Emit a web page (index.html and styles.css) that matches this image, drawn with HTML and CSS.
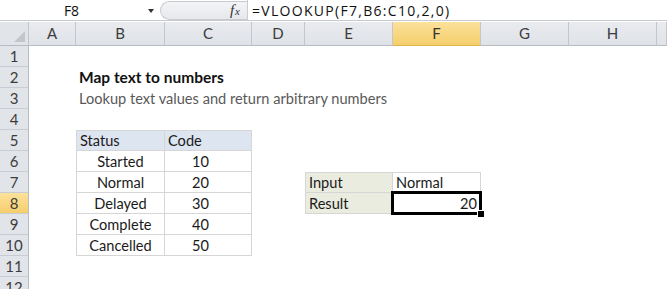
FILE: index.html
```html
<!DOCTYPE html>
<html>
<head>
<meta charset="utf-8">
<link rel="stylesheet" href="styles.css">
</head>
<body>
<div class="app">
  <div class="formula-bar">
    <div class="name-box"><span class="name">F8</span><span class="caret"></span></div>
    <div class="fx-area"><div class="pill"><span class="fx"><i>f</i><i class="x">x</i></span></div></div>
    <div class="formula">=VLOOKUP(F7,B6:C10,2,0)</div>
  </div>
  <div class="sheet">
    <div class="corner"><span class="tri"></span></div><div class="ch">A</div><div class="ch">B</div><div class="ch">C</div><div class="ch">D</div><div class="ch">E</div><div class="ch active">F</div><div class="ch">G</div><div class="ch">H</div><div class="ch"></div>

    <div class="rh">1</div><div></div><div></div><div></div><div></div><div></div><div></div><div></div><div></div><div></div>
    <div class="rh">2</div><div></div><div class="title">Map text to numbers</div><div></div><div></div><div></div><div></div><div></div><div></div><div></div>
    <div class="rh">3</div><div></div><div class="subtitle">Lookup text values and return arbitrary numbers</div><div></div><div></div><div></div><div></div><div></div><div></div><div></div>
    <div class="rh">4</div><div></div><div></div><div></div><div></div><div></div><div></div><div></div><div></div><div></div>
    <div class="rh">5</div><div></div><div class="t th first top">Status</div><div class="t th top">Code</div><div></div><div></div><div></div><div></div><div></div><div></div>
    <div class="rh">6</div><div></div><div class="t tb first">Started</div><div class="t tn">10</div><div></div><div></div><div></div><div></div><div></div><div></div>
    <div class="rh">7</div><div></div><div class="t tb first">Normal</div><div class="t tn">20</div><div></div><div class="t lbl first top">Input</div><div class="t val top">Normal</div><div></div><div></div><div></div>
    <div class="rh active">8</div><div></div><div class="t tb first">Delayed</div><div class="t tn">30</div><div></div><div class="t lbl first">Result</div><div class="t val num sel">20</div><div></div><div></div><div></div>
    <div class="rh">9</div><div></div><div class="t tb first">Complete</div><div class="t tn">40</div><div></div><div></div><div></div><div></div><div></div><div></div>
    <div class="rh">10</div><div></div><div class="t tb first">Cancelled</div><div class="t tn">50</div><div></div><div></div><div></div><div></div><div></div><div></div>
    <div class="rh">11</div><div></div><div></div><div></div><div></div><div></div><div></div><div></div><div></div><div></div>
    <div class="rh">12</div><div></div><div></div><div></div><div></div><div></div><div></div><div></div><div></div><div></div>
  </div>
</div>
</body>
</html>
```
FILE: styles.css
```css
* { box-sizing: border-box; }
html, body { margin: 0; padding: 0; background: #fff; }
body { width: 667px; height: 289px; overflow: hidden; font-family: "Lato", "Open Sans", sans-serif; }

.formula-bar {
  display: flex;
  height: 21px;
  border-bottom: 1px solid #c6c9ce;
  margin-bottom: 1px;
  background: #fff;
}
.name-box {
  width: 157px;
  display: flex;
  align-items: center;
  justify-content: center;
  position: relative;
  font-family: "Open Sans", "Noto Sans", sans-serif;
  font-size: 14px;
  color: #111;
}
.name { margin-right: 14px; }
.caret {
  position: absolute;
  left: 148px;
  top: 9px;
  width: 0; height: 0;
  border-left: 3px solid transparent;
  border-right: 3px solid transparent;
  border-top: 4px solid #333;
}
.fx-area {
  width: 91px;
  padding: 1px 0 1px 3px;
  border-right: 1px solid #c9ccd1;
}
.pill {
  height: 19px;
  border-radius: 10px 0 0 10px;
  background: linear-gradient(#f3f4f6, #e6e8eb);
  border: 1px solid #c7cacf;
  border-right: none;
  display: flex;
  align-items: center;
  justify-content: flex-end;
  padding-right: 7px;
}
.fx { font-family: "Liberation Serif", serif; font-size: 15px; color: #333; font-style: italic; line-height: 1; }
.fx .x { font-size: 11px; margin-left: 1px; }
.formula {
  flex: 1;
  padding-left: 4px;
  font-family: "Open Sans", "Noto Sans", sans-serif;
  font-size: 14px;
  letter-spacing: 1.3px;
  line-height: 21px;
  color: #111;
}

.sheet {
  display: grid;
  grid-template-columns: 29px 47px 89px 87px 53px 88px 88px 88px 88px 10px;
  grid-template-rows: 24px repeat(12, 21px);
  font-size: 14.6px;
  color: #1a1a1a;
}
.sheet > div { min-width: 0; white-space: nowrap; line-height: 21px; }

.corner {
  background: #e1e4e9;
  border-right: 1px solid #c3c7cd;
  border-bottom: 1px solid #b7bcc3;
  position: relative;
}
.tri {
  position: absolute;
  right: 3px; bottom: 3px;
  width: 0; height: 0;
  border-left: 11px solid transparent;
  border-bottom: 11px solid #c3c6cb;
}
.ch {
  background: linear-gradient(#e9ebef, #dfe2e7);
  border-right: 1px solid #c3c7cd;
  border-bottom: 1px solid #b7bcc3;
  text-align: center;
  line-height: 23px !important;
  color: #3c3c3c;
  font-size: 15px;
}
.ch.active { background: linear-gradient(#fbe19a, #f6cf6c); color: #333; border-bottom-color: #e0b34a; }
.rh {
  background: #e1e4e9;
  border-right: 1px solid #b7bcc3;
  border-bottom: 1px solid #c9cdd3;
  text-align: center;
  color: #3c3c3c;
  font-size: 15px;
}
.rh.active { background: linear-gradient(#fbe19a, #f6cf6c); }

.title { font-weight: bold; font-size: 15.5px; padding-left: 3px; color: #111; overflow: visible; }
.subtitle { padding-left: 3px; color: #595959; overflow: visible; }

.t { border-right: 1px solid #d6d6d6; border-bottom: 1px solid #d6d6d6; padding-left: 3px; }
.t.first { border-left: 1px solid #d6d6d6; }
.t.top { border-top: 1px solid #d6d6d6; line-height: 19px !important; }
.th { background: #dde5f0; }
.tb { text-align: center; padding-left: 0; }
.tn { padding-left: 27px; }
.lbl { background: #eaecdf; }
.num { text-align: right; padding-right: 3px; }
.sel { position: relative; }
.sel::before {
  content: "";
  position: absolute;
  top: -2px; left: -2px; right: -2px; bottom: -2px;
  border: 3px solid #000;
}
.sel::after {
  content: "";
  position: absolute;
  right: -5px; bottom: -5px;
  width: 6px; height: 6px;
  background: #000;
  border: 1px solid #fff;
}
```
